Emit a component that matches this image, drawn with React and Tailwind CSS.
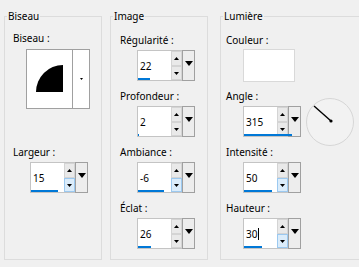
import React from "react";

const font = { fontFamily: '"Noto Sans", "Open Sans", sans-serif' };

const UpArrow = () => (
  <svg width="5" height="3" viewBox="0 0 5 3">
    <polygon points="0,3 5,3 2.5,0" fill="#000" />
  </svg>
);

const DownArrow = () => (
  <svg width="5" height="3" viewBox="0 0 5 3">
    <polygon points="0,0 5,0 2.5,3" fill="#000" />
  </svg>
);

// Spin box with a value bar along the bottom and a dropdown button
const Spin = ({ value, bar, hover, caret }) => (
  <div className="flex h-[31px] w-[58px]">
    <div className="relative flex w-[45px] border border-[#c4c4c4] border-r-0 bg-white">
      <div className="flex w-[33px] items-center pl-[2px] text-[10px] leading-[14px] text-black">
        {value}
        {caret && <span className="ml-px h-[12px] w-px bg-black" />}
      </div>
      <div className="flex w-[11px] flex-col">
        <div className="flex h-[15px] items-center justify-center border border-[#d4d4d4] bg-[#e9e9e9]">
          <UpArrow />
        </div>
        <div
          className={
            hover
              ? "flex h-[14px] items-center justify-center border border-[#9cc9f0] bg-[#dbecfa]"
              : "flex h-[14px] items-center justify-center border border-[#d4d4d4] bg-[#e9e9e9]"
          }
        >
          <DownArrow />
        </div>
      </div>
      <div className={`absolute bottom-0 left-0 h-[2px] bg-[#0078d7] ${bar}`} />
    </div>
    <div className="flex w-[13px] justify-center border border-[#a0a0a0] bg-[#ededed] pt-[10px]">
      <svg width="8" height="5" viewBox="0 0 8 5">
        <polygon points="0,0 8,0 4,5" fill="#000" />
      </svg>
    </div>
  </div>
);

const Label = ({ children, className = "" }) => (
  <div className={`text-[10px] leading-[14px] text-black ${className}`}>{children}</div>
);

const Group = ({ title, className, children }) => (
  <div className={`relative mt-[16px] h-[244px] shrink-0 border border-[#dcdcdc] ${className}`}>
    <span className="absolute -top-[8px] left-[2px] bg-[#f0f0f0] px-px text-[10px] leading-[14px] text-black">
      {title}
    </span>
    {children}
  </div>
);

const Field = ({ label, labelPad, boxPad, first, children }) => (
  <div className={first ? "" : "mt-[8px]"}>
    <Label className={labelPad}>{label}</Label>
    <div className={`mt-[3px] ${boxPad}`}>{children}</div>
  </div>
);

const imageFields = [
  { label: "Régularité :", value: "22", bar: "w-[12px]" },
  { label: "Profondeur :", value: "2", bar: "w-[1px]" },
  { label: "Ambiance :", value: "-6", bar: "w-[26px]", hover: true },
  { label: "Éclat :", value: "26", bar: "w-[13px]" },
];

export default function App() {
  return (
    <div className="flex h-[267px] w-[359px] overflow-hidden bg-[#f0f0f0]" style={font}>
      {/* Biseau */}
      <Group title="Biseau" className="ml-[4px] w-[98px]">
        <div className="pt-[14px]">
          <Label className="pl-[8px]">Biseau :</Label>
          <div className="ml-[21px] mt-[4px] flex h-[60px] w-[64px] border border-[#a0a0a0] bg-white">
            <div className="w-[45px] pl-[9px] pt-[15px]">
              <svg width="28" height="28" viewBox="0 0 28 28">
                <path d="M27 27 L0 27 A27 27 0 0 1 27 0 Z" fill="#000" />
              </svg>
            </div>
            <div className="flex flex-1 justify-center border-l border-[#a0a0a0] pt-[28px]">
              <svg width="3" height="2" viewBox="0 0 3 2">
                <polygon points="0,0 3,0 1.5,2" fill="#000" />
              </svg>
            </div>
          </div>
          <Label className="mt-[36px] pl-[8px]">Largeur :</Label>
          <div className="ml-[25px] mt-[3px]">
            <Spin value="15" bar="w-[27px]" hover />
          </div>
        </div>
      </Group>

      {/* Image */}
      <Group title="Image" className="ml-[8px] w-[98px]">
        <div className="pt-[16px]">
          {imageFields.map((f, i) => (
            <Field key={f.label} label={f.label} labelPad="pl-[9px]" boxPad="pl-[26px]" first={i === 0}>
              <Spin value={f.value} bar={f.bar} hover={f.hover} />
            </Field>
          ))}
        </div>
      </Group>

      {/* Lumière */}
      <Group title="Lumière" className="ml-[12px] w-[150px]">
        <div className="pt-[16px]">
          <Label className="pl-[5px]">Couleur :</Label>
          <div className="ml-[22px] mt-[2px] h-[33px] w-[52px] border border-[#d9d9d9] bg-white" />
          <Label className="mt-[7px] pl-[5px]">Angle :</Label>
          <div className="mt-[3px] flex h-[31px] pl-[22px]">
            <Spin value="315" bar="w-[48px]" />
            <div className="-mt-[8px] ml-[5px] h-[48px] w-[48px] shrink-0">
              <svg width="48" height="48" viewBox="0 0 48 48">
                <circle cx="24" cy="24" r="23.5" fill="#f2f2f2" stroke="#d6d6d6" />
                <line x1="8" y1="8" x2="25" y2="23" stroke="#000" strokeWidth="1.4" />
                <circle cx="25" cy="23" r="1.6" fill="#000" />
              </svg>
            </div>
          </div>
          <Field label="Intensité :" labelPad="pl-[5px]" boxPad="pl-[22px]">
            <Spin value="50" bar="w-[28px]" hover />
          </Field>
          <Field label="Hauteur :" labelPad="pl-[5px]" boxPad="pl-[22px]">
            <Spin value="30" bar="w-[18px]" hover caret />
          </Field>
        </div>
      </Group>
    </div>
  );
}
